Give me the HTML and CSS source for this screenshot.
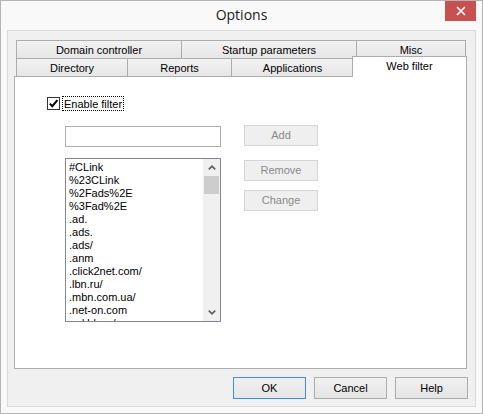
FILE: index.html
```html
<!DOCTYPE html>
<html>
<head>
<meta charset="utf-8">
<title>Options</title>
<link rel="stylesheet" href="styles.css">
</head>
<body>
<div class="window">
  <div class="titlebar">
    <div class="tb-spacer"></div>
    <div class="title">Options</div>
    <div class="close">
      <svg width="10" height="10" viewBox="0 0 10 10"><path d="M1 1 L9 9 M9 1 L1 9" stroke="#fff" stroke-width="1.6" fill="none"/></svg>
    </div>
  </div>
  <div class="client">
    <div class="tabctl">
      <div class="tabrow row1">
        <div class="tab t-dc">Domain controller</div>
        <div class="tab t-sp">Startup parameters</div>
        <div class="tab t-misc">Misc</div>
      </div>
      <div class="tabrow row2">
        <div class="tab t-dir">Directory</div>
        <div class="tab t-rep">Reports</div>
        <div class="tab t-app">Applications</div>
        <div class="tab tab-sel">Web filter</div>
      </div>
      <div class="panel">
        <div class="check-row">
          <span class="checkbox">
            <svg width="11" height="11" viewBox="0 0 11 11"><path d="M1.8 5.6 L4.3 8.2 L9.4 2.2" stroke="#000" stroke-width="2" fill="none"/></svg>
          </span>
          <span class="focus-label">Enable filter</span>
        </div>
        <div class="editor">
          <div class="left-col">
            <div class="textbox"></div>
            <div class="listbox">
              <div class="items">
                <div class="item">#CLink</div>
                <div class="item">%23CLink</div>
                <div class="item">%2Fads%2E</div>
                <div class="item">%3Fad%2E</div>
                <div class="item">.ad.</div>
                <div class="item">.ads.</div>
                <div class="item">.ads/</div>
                <div class="item">.anm</div>
                <div class="item">.click2net.com/</div>
                <div class="item">.lbn.ru/</div>
                <div class="item">.mbn.com.ua/</div>
                <div class="item">.net-on.com</div>
                <div class="item">.ad.bb.ru/</div>
              </div>
              <div class="scrollbar">
                <div class="sb-btn">
                  <svg width="8" height="5" viewBox="0 0 8 5"><path d="M0.8 4.4 L4 1.2 L7.2 4.4" stroke="#606060" stroke-width="1.7" fill="none"/></svg>
                </div>
                <div class="thumb"></div>
                <div class="sb-track"></div>
                <div class="sb-btn">
                  <svg width="8" height="5" viewBox="0 0 8 5"><path d="M0.8 0.6 L4 3.8 L7.2 0.6" stroke="#606060" stroke-width="1.7" fill="none"/></svg>
                </div>
              </div>
            </div>
          </div>
          <div class="right-col">
            <div class="btn disabled b-add">Add</div>
            <div class="btn disabled b-remove">Remove</div>
            <div class="btn disabled b-change">Change</div>
          </div>
        </div>
      </div>
    </div>
    <div class="footer">
      <div class="btn dlg default">OK</div>
      <div class="btn dlg">Cancel</div>
      <div class="btn dlg">Help</div>
    </div>
  </div>
</div>
</body>
</html>
```

FILE: styles.css
```css
html, body {
  margin: 0;
  padding: 0;
  background: #ffffff;
}

body {
  width: 483px;
  height: 414px;
  font-family: "Liberation Sans", Arial, sans-serif;
  font-size: 11px;
  color: #000;
}

.window {
  box-sizing: border-box;
  width: 483px;
  height: 414px;
  border: 1px solid #b4b4b4;
  background: #f9f9f9;
  display: flex;
  flex-direction: column;
}

.titlebar {
  height: 29px;
  display: flex;
  align-items: flex-start;
  flex: none;
}

.tb-spacer {
  width: 37px;
  flex: none;
}

.title {
  flex: 1;
  text-align: center;
  font-family: "Open Sans", "Liberation Sans", sans-serif;
  font-size: 14px;
  line-height: 28px;
  color: #1a1a1a;
}

.close {
  width: 31px;
  height: 20px;
  margin-right: 6px;
  background: #c75050;
  display: flex;
  align-items: center;
  justify-content: center;
  flex: none;
}

.client {
  flex: 1;
  margin: 0 6px 6px 6px;
  border: 1px solid #dadada;
  background: #f0f0f0;
  display: flex;
  flex-direction: column;
}

.tabctl {
  width: 453px;
  margin: 9px 0 0 6px;
}

.tabrow {
  display: flex;
  align-items: flex-start;
  height: 18px;
  padding-left: 2px;
}

.tab {
  box-sizing: border-box;
  height: 18px;
  border: 1px solid #acacac;
  border-bottom: none;
  background: linear-gradient(#f2f2f2, #e6e6e6);
  text-align: center;
  line-height: 16px;
  padding-top: 1px;
  white-space: nowrap;
}

.tab + .tab {
  margin-left: -1px;
}

.t-dc { width: 166px; }
.t-sp { width: 176px; }
.t-misc { width: 110px; }

.t-dir { width: 112px; }
.t-rep { width: 105px; }
.t-app { width: 123px; }

.tab-sel {
  width: 115px;
  height: 21px;
  margin-top: -2px;
  margin-bottom: -1px;
  padding-top: 0;
  background: #ffffff;
  border-color: #adadad;
  line-height: 18px;
  position: relative;
  z-index: 1;
}

.tab + .tab-sel {
  margin-left: -2px;
}

.panel {
  box-sizing: border-box;
  height: 293px;
  border: 1px solid #adadad;
  background: #ffffff;
  padding: 19px 0 0 32px;
}

.check-row {
  display: flex;
  align-items: center;
  height: 15px;
}

.checkbox {
  box-sizing: border-box;
  width: 13px;
  height: 13px;
  border: 1px solid #333333;
  background: #fff;
  display: flex;
  align-items: center;
  justify-content: center;
}

.focus-label {
  margin-left: 2px;
  padding: 0 1px;
  height: 13px;
  line-height: 14px;
  border: 1px dotted #000;
}

.editor {
  display: flex;
  align-items: flex-start;
  margin: 14px 0 0 18px;
}

.left-col {
  width: 156px;
  padding-top: 1px;
  display: flex;
  flex-direction: column;
}

.textbox {
  box-sizing: border-box;
  height: 21px;
  border: 1px solid #abadb3;
  background: #fff;
}

.listbox {
  box-sizing: border-box;
  height: 164px;
  margin-top: 11px;
  border: 1px solid #828790;
  background: #fff;
  display: flex;
}

.items {
  flex: 1;
  overflow: hidden;
  padding: 2px 0 0 3px;
}

.item {
  height: 13px;
  line-height: 13px;
  white-space: nowrap;
}

.scrollbar {
  width: 17px;
  flex: none;
  background: #f0f0f0;
  display: flex;
  flex-direction: column;
}

.sb-btn {
  height: 17px;
  display: flex;
  align-items: center;
  justify-content: center;
  flex: none;
}

.thumb {
  height: 18px;
  margin: 0 1px;
  background: #cdcdcd;
  flex: none;
}

.sb-track {
  flex: 1;
}

.right-col {
  width: 74px;
  margin-left: 23px;
  display: flex;
  flex-direction: column;
}

.btn {
  box-sizing: border-box;
  height: 21px;
  border: 1px solid #acacac;
  background: linear-gradient(#f0f0f0, #e5e5e5);
  text-align: center;
  line-height: 19px;
}

.btn.disabled {
  border-color: #d5d5d5;
  background: #efefef;
  color: #8a8a8a;
}

.b-remove { margin-top: 14px; }
.b-change { margin-top: 9px; }

.footer {
  display: flex;
  justify-content: flex-end;
  gap: 8px;
  margin-top: 8px;
  padding-right: 7px;
}

.btn.dlg {
  width: 73px;
  height: 22px;
  line-height: 20px;
}

.btn.default {
  border-color: #3c8ee0;
}
```
